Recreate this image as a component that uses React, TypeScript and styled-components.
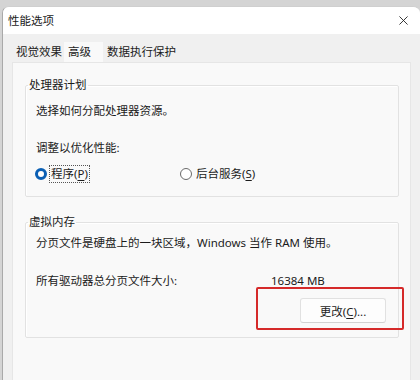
import React from "react";
import styled, { createGlobalStyle } from "styled-components";

const GlobalStyle = createGlobalStyle`
  html, body {
    margin: 0;
    padding: 0;
    background: #d4d4d4;
    overflow: hidden;
  }
  body {
    font-family: "Noto Sans", "Noto Sans CJK SC", sans-serif;
    font-size: 11.5px;
    color: #1b1b1b;
  }
`;

const Window = styled.div`
  margin: 6px 0 0 2px;
  width: 417px;
  height: 374px;
  background: #f0f0f0;
  border-left: 1px solid #a9a9a9;
  border-top: 1px solid #cfcfcf;
  border-radius: 7px 7px 0 0;
  overflow: hidden;
  display: flex;
  flex-direction: column;
`;

const TitleBar = styled.div`
  height: 27px;
  flex: none;
  background: #ffffff;
  display: flex;
  align-items: center;
  justify-content: space-between;
  padding: 0 12px 0 5px;
`;

const Title = styled.span`
  font-size: 11.5px;
  line-height: 16px;
`;

const CloseIcon = styled.svg`
  width: 9px;
  height: 9px;
  display: block;
`;

const Body = styled.div`
  flex: 1;
  padding: 8px 0 0 9px;
  display: flex;
  flex-direction: column;
`;

const Tabs = styled.div`
  display: flex;
  height: 20px;
  align-items: stretch;
`;

const Tab = styled.div<{ $active?: boolean; $pad: string }>`
  display: flex;
  align-items: center;
  padding: ${(p) => p.$pad};
  background: ${(p) => (p.$active ? "#f9f9f9" : "transparent")};
  line-height: 16px;
  white-space: nowrap;
`;

const Panel = styled.div`
  flex: 1;
  width: 399px;
  background: #f9f9f9;
  border: 1px solid #e6e6e6;
  border-bottom: none;
  box-sizing: border-box;
  padding: 14px 0 0 12px;
  display: flex;
  flex-direction: column;
  gap: 17px;
`;

const Group = styled.fieldset`
  margin: 0;
  padding: 0 0 14px 0;
  width: 374px;
  box-sizing: border-box;
  border: 1px solid #e2e2e2;
  box-shadow: inset 1px 1px 0 #ffffff;
  border-radius: 2px;
  min-width: 0;
`;

const Legend = styled.legend`
  margin-left: 2px;
  padding: 0 1px;
  line-height: 16px;
  font-size: 11.5px;
`;

const GroupBody = styled.div<{ $top: number }>`
  padding: ${(p) => p.$top}px 0 0 10px;
  display: flex;
  flex-direction: column;
`;

const Line = styled.div<{ $gap?: number }>`
  line-height: 16px;
  margin-top: ${(p) => p.$gap ?? 0}px;
  white-space: nowrap;
`;

const RadioRow = styled.div`
  margin-top: 10px;
  display: grid;
  grid-template-columns: 145px auto;
  margin-left: -1px;
`;

const RadioItem = styled.label`
  display: flex;
  align-items: center;
  gap: 3px;
  line-height: 16px;
`;

const RadioDot = styled.span<{ $checked?: boolean }>`
  width: 12px;
  height: 12px;
  box-sizing: border-box;
  border-radius: 50%;
  flex: none;
  background: ${(p) => (p.$checked ? "#ffffff" : "#ffffff")};
  border: ${(p) => (p.$checked ? "3.5px solid #0a5fb4" : "1px solid #6a6a6a")};
`;

const RadioLabel = styled.span<{ $focus?: boolean }>`
  padding: 0 1px;
  outline: ${(p) => (p.$focus ? "1px dotted #555" : "none")};
  outline-offset: 0;
`;

const Key = styled.span`
  text-decoration: underline;
  text-underline-offset: 2px;
`;

const SizeRow = styled.div`
  margin-top: 22px;
  display: grid;
  grid-template-columns: 235px auto;
  line-height: 16px;
`;

const ButtonRow = styled.div`
  margin-top: 9px;
  display: flex;
  justify-content: flex-end;
  padding-right: 12px;
`;

const ButtonWrap = styled.div`
  position: relative;
`;

const Button = styled.button`
  width: 86px;
  height: 25px;
  background: #fdfdfd;
  border: 1px solid #e1e1e1;
  border-bottom-color: #d2d2d2;
  border-radius: 3px;
  font-family: inherit;
  font-size: 11.5px;
  color: #1b1b1b;
  padding: 0;
  cursor: default;
`;

const Highlight = styled.div`
  position: absolute;
  left: -44px;
  right: -18px;
  top: -11px;
  bottom: -7px;
  border: 2px solid #d52a2a;
  border-radius: 2px;
  pointer-events: none;
`;

export default function App() {
  return (
    <>
      <GlobalStyle />
      <Window>
        <TitleBar>
          <Title>性能选项</Title>
          <CloseIcon viewBox="0 0 10 10">
            <path d="M0.5 0.5 L9.5 9.5 M9.5 0.5 L0.5 9.5" stroke="#222" strokeWidth="1" />
          </CloseIcon>
        </TitleBar>
        <Body>
          <Tabs>
            <Tab $pad="0 2px 0 4px">视觉效果</Tab>
            <Tab $active $pad="0 12px 0 4px">高级</Tab>
            <Tab $pad="0 4px 0 4px">数据执行保护</Tab>
          </Tabs>
          <Panel>
            <Group>
              <Legend>处理器计划</Legend>
              <GroupBody $top={10}>
                <Line>选择如何分配处理器资源。</Line>
                <Line $gap={21}>调整以优化性能:</Line>
                <RadioRow>
                  <RadioItem>
                    <RadioDot $checked />
                    <RadioLabel $focus>
                      程序(<Key>P</Key>)
                    </RadioLabel>
                  </RadioItem>
                  <RadioItem>
                    <RadioDot />
                    <RadioLabel>
                      后台服务(<Key>S</Key>)
                    </RadioLabel>
                  </RadioItem>
                </RadioRow>
              </GroupBody>
            </Group>
            <Group>
              <Legend>虚拟内存</Legend>
              <GroupBody $top={5}>
                <Line>分页文件是硬盘上的一块区域，Windows 当作 RAM 使用。</Line>
                <SizeRow>
                  <span>所有驱动器总分页文件大小:</span>
                  <span>16384 MB</span>
                </SizeRow>
                <ButtonRow>
                  <ButtonWrap>
                    <Button>
                      更改(<Key>C</Key>)...
                    </Button>
                    <Highlight />
                  </ButtonWrap>
                </ButtonRow>
              </GroupBody>
            </Group>
          </Panel>
        </Body>
      </Window>
    </>
  );
}
